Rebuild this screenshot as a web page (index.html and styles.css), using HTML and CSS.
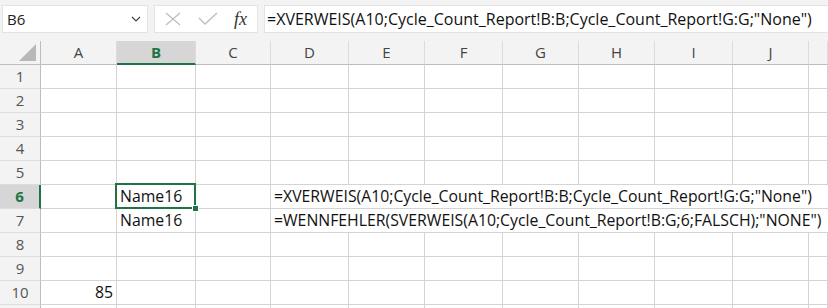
FILE: index.html
```html
<!DOCTYPE html>
<html lang="de">
<head>
  <meta charset="UTF-8" />
  <title>Mappe1 - Excel</title>
  <link rel="stylesheet" href="styles.css">
</head>
<body>

  <div class="formula-bar">
    <div class="name-box">
      <span>B6</span>
      <svg class="chevron" width="10" height="6" viewBox="0 0 10 6"><polyline points="1,1 5,5 9,1" fill="none" stroke="#444" stroke-width="1.2"/></svg>
    </div>
    <div class="fx-buttons">
      <svg class="fx-icon" width="16" height="14" viewBox="0 0 16 14"><path d="M1 1 L15 13 M15 1 L1 13" stroke="#bdbdbd" stroke-width="1.3" fill="none"/></svg>
      <svg class="fx-icon" width="20" height="14" viewBox="0 0 20 14"><polyline points="1,6 7,12 19,1" stroke="#bdbdbd" stroke-width="1.3" fill="none"/></svg>
      <span class="fx-label">fx</span>
    </div>
    <div class="formula-input">=XVERWEIS(A10;Cycle_Count_Report!B:B;Cycle_Count_Report!G:G;"None")</div>
  </div>

  <div class="sheet">
    <div class="corner"><span class="corner-tri"></span></div>
    <div class="col-head">A</div>
    <div class="col-head selected">B</div>
    <div class="col-head">C</div>
    <div class="col-head">D</div>
    <div class="col-head">E</div>
    <div class="col-head">F</div>
    <div class="col-head">G</div>
    <div class="col-head">H</div>
    <div class="col-head">I</div>
    <div class="col-head">J</div>
    <div class="col-head"></div>
  </div>

  <div class="sheet" id="rows"></div>

  <script>
    // rows 1..10 visible, row 11 only peeks in at the bottom
    const values = {
      '6B': 'Name16',
      '6D': '=XVERWEIS(A10;Cycle_Count_Report!B:B;Cycle_Count_Report!G:G;"None")',
      '7B': 'Name16',
      '7D': '=WENNFEHLER(SVERWEIS(A10;Cycle_Count_Report!B:G;6;FALSCH);"NONE")',
      '10A': '85'
    };
    const cols = ['A', 'B', 'C', 'D', 'E', 'F', 'G', 'H', 'I', 'J', 'K'];
    const rows = document.getElementById('rows');

    for (let r = 1; r <= 11; r++) {
      const head = document.createElement('div');
      head.className = 'row-head' + (r === 6 ? ' selected' : '');
      head.textContent = r <= 10 ? r : '';
      rows.appendChild(head);

      for (let c = 0; c < cols.length; c++) {
        const key = r + cols[c];
        const cell = document.createElement('div');
        cell.className = 'cell';
        if (values[key] !== undefined) {
          cell.textContent = values[key];
          if (/^\d+$/.test(values[key])) cell.classList.add('num');
          // long formulas run over the empty cells to the right
          if (cols[c] === 'D') {
            cell.classList.add('overflow');
            rows.appendChild(cell);
            break;
          }
        }
        if (key === '6B') cell.classList.add('active');
        rows.appendChild(cell);
      }
    }
  </script>
</body>
</html>
```

FILE: styles.css
```css
body, html {
  margin: 0;
  padding: 0;
  width: 100%;
  height: 100%;
  overflow: hidden;
  background: #fff;
  font-family: "Open Sans", "Noto Sans", sans-serif;
  color: #000;
}
.formula-bar {
  display: flex;
  align-items: center;
  gap: 6px;
  height: 41px;
  padding: 0 0 3px 2px;
  box-sizing: border-box;
  background: #f3f3f3;
}
.name-box {
  display: flex;
  align-items: center;
  justify-content: space-between;
  width: 146px;
  height: 28px;
  box-sizing: border-box;
  padding: 0 6px 0 4px;
  background: #fff;
  border: 1px solid #e3e3e3;
  font-size: 15px;
  color: #222;
}
.fx-buttons {
  display: flex;
  align-items: center;
  width: 104px;
  height: 28px;
  box-sizing: border-box;
  padding: 0 8px 0 10px;
  background: #fff;
  border: 1px solid #e3e3e3;
}
.fx-icon {
  margin-right: 17px;
}
.fx-icon + .fx-icon {
  margin-right: 16px;
}
.fx-label {
  font-family: "Liberation Serif", serif;
  font-style: italic;
  font-size: 18px;
  color: #333;
}
.formula-input {
  flex: 1;
  height: 28px;
  line-height: 27px;
  box-sizing: border-box;
  padding-left: 2px;
  background: #fff;
  border: 1px solid #e3e3e3;
  border-right: none;
  font-size: 16px;
  white-space: nowrap;
  overflow: hidden;
  color: #111;
}
.sheet {
  display: grid;
  grid-template-columns: 41px 76px 79px 75px 78px 76px 78px 76px 76px 78px 76px 1fr;
  grid-auto-rows: 24px;
}
.corner, .col-head {
  background: #f3f3f3;
  border-bottom: 1px solid #bdbdbd;
  box-sizing: border-box;
}
.corner {
  border-right: 1px solid #bdbdbd;
  display: flex;
  justify-content: flex-end;
  align-items: flex-end;
  padding: 0 4px 3px 0;
}
.corner-tri {
  width: 0;
  height: 0;
  border-left: 17px solid transparent;
  border-bottom: 17px solid #b8b8b8;
}
.col-head {
  border-right: 1px solid #dcdcdc;
  text-align: center;
  line-height: 23px;
  font-size: 15px;
  color: #444;
}
.col-head.selected {
  background: #d6d6d6;
  border-bottom: 2px solid #217346;
  color: #217346;
  font-weight: bold;
}
.row-head {
  background: #f3f3f3;
  border-right: 1px solid #bdbdbd;
  border-bottom: 1px solid #dcdcdc;
  box-sizing: border-box;
  text-align: center;
  line-height: 23px;
  font-size: 15px;
  color: #555;
}
.row-head.selected {
  background: #d6d6d6;
  border-right: 2px solid #217346;
  color: #217346;
  font-weight: bold;
}
.cell {
  position: relative;
  border-right: 1px solid #d4d4d4;
  border-bottom: 1px solid #d4d4d4;
  box-sizing: border-box;
  padding: 0 3px;
  line-height: 23px;
  font-size: 15.8px;
  white-space: nowrap;
  color: #111;
}
.cell.num {
  text-align: right;
}
.cell.overflow {
  grid-column: span 8;
  overflow: visible;
  border-right: none;
}
.cell.active::after {
  content: "";
  position: absolute;
  left: -2px;
  top: -2px;
  right: -1px;
  bottom: -1px;
  border: 2px solid #217346;
  z-index: 2;
}
.cell.active::before {
  content: "";
  position: absolute;
  right: -4px;
  bottom: -4px;
  width: 5px;
  height: 5px;
  background: #217346;
  border: 1px solid #fff;
  z-index: 3;
}
```
